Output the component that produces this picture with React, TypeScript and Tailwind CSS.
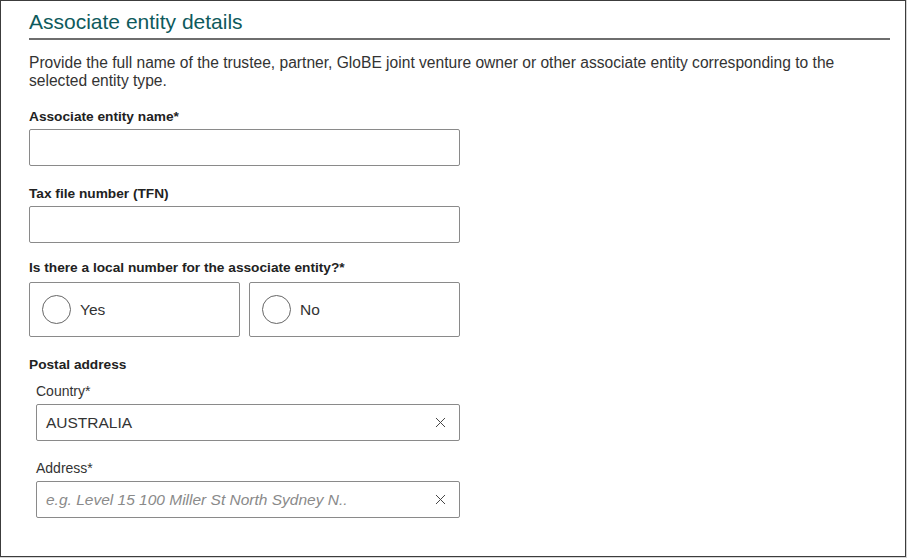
import { X } from 'lucide-react';

const font = { fontFamily: '"Liberation Sans", Arial, sans-serif' };

function Label({ children }: { children: React.ReactNode }) {
  return <p className="text-[13.7px] font-bold text-[#222] leading-[16px]">{children}</p>;
}

function TextBox() {
  return <div className="w-[431px] h-[37px] border border-[#8a8a8a] rounded-[2px] bg-white" />;
}

function Radio({ label }: { label: string }) {
  return (
    <div className="w-[211px] h-[55px] border border-[#8a8a8a] rounded-[2px] flex items-center gap-[9px] pl-[12px]">
      <span className="w-[29px] h-[29px] rounded-full border border-[#666] bg-white" />
      <span className="text-[15.5px] text-[#333]">{label}</span>
    </div>
  );
}

function ClearField({ value, placeholder }: { value?: string; placeholder?: string }) {
  return (
    <div className="w-[424px] h-[37px] border border-[#8a8a8a] rounded-[2px] flex items-center justify-between pl-[9px] pr-[10px]">
      {value ? (
        <span className="text-[15.5px] text-[#333]">{value}</span>
      ) : (
        <span className="text-[15.5px] italic text-[#8a8a8a]">{placeholder}</span>
      )}
      <X className="w-[17px] h-[17px] text-[#444]" strokeWidth={1.4} />
    </div>
  );
}

export default function App() {
  return (
    <div className="w-[907px] h-[558px] bg-[#d4d4d4]" style={font}>
      <div className="w-[906px] h-[557px] bg-white border border-[#3c3c3c] pl-[28px] pr-[15px]">
        <h2 className="text-[21px] text-[#0e5a5c] leading-[24px] pt-[9px] pb-[4px] border-b-2 border-[#6e6e6e]">
          Associate entity details
        </h2>
        <p className="mt-[14px] text-[15.6px] leading-[18px] text-[#333]">
          Provide the full name of the trustee, partner, GloBE joint venture owner or other associate entity corresponding to the
          <br />
          selected entity type.
        </p>

        <div className="mt-[19px] flex flex-col gap-[4px]">
          <Label>Associate entity name*</Label>
          <TextBox />
        </div>

        <div className="mt-[20px] flex flex-col gap-[4px]">
          <Label>Tax file number (TFN)</Label>
          <TextBox />
        </div>

        <div className="mt-[17px] flex flex-col gap-[6px]">
          <Label>Is there a local number for the associate entity?*</Label>
          <div className="flex gap-[9px]">
            <Radio label="Yes" />
            <Radio label="No" />
          </div>
        </div>

        <div className="mt-[20px]">
          <Label>Postal address</Label>
          <div className="pl-[7px] mt-[10px] flex flex-col gap-[4px]">
            <p className="text-[14px] text-[#333] leading-[17px]">Country*</p>
            <ClearField value="AUSTRALIA" />
          </div>
          <div className="pl-[7px] mt-[19px] flex flex-col gap-[4px]">
            <p className="text-[14px] text-[#333] leading-[17px]">Address*</p>
            <ClearField placeholder="e.g. Level 15 100 Miller St North Sydney N.." />
          </div>
        </div>
      </div>
    </div>
  );
}
